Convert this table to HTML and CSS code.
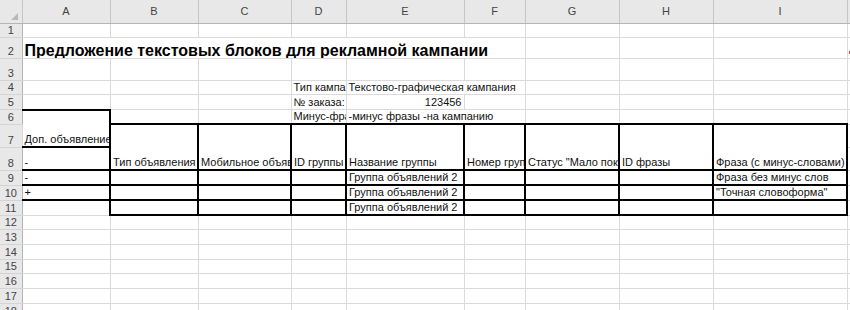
FILE: index.html
```html
<!DOCTYPE html>
<html lang="ru">
<head>
  <meta charset="UTF-8">
  <title>Предложение текстовых блоков</title>
  <link rel="stylesheet" href="styles.css">
</head>
<body>
  <table class="sheet">
    <colgroup>
      <col class="col-rh">
      <col class="col-a">
      <col class="col-b">
      <col class="col-c">
      <col class="col-d">
      <col class="col-e">
      <col class="col-f">
      <col class="col-g">
      <col class="col-h">
      <col class="col-i">
      <col class="col-j">
    </colgroup>
    <thead>
      <tr>
        <th class="corner">
          <!-- select all -->
          <svg width="7" height="7" viewBox="0 0 7 7"><polygon points="7,0 7,7 0,7" fill="#b9b9b9"/></svg>
        </th>
        <th>A</th><th>B</th><th>C</th><th>D</th><th>E</th><th>F</th><th>G</th><th>H</th><th>I</th><th>J</th>
      </tr>
    </thead>
    <tbody>
      <tr class="r14"><th>1</th><td></td><td></td><td></td><td></td><td></td><td></td><td></td><td></td><td></td><td></td></tr>
      <tr class="r21">
        <th>2</th>
        <td colspan="6" class="title">Предложение текстовых блоков для рекламной кампании</td>
        <td></td><td></td><td></td>
        <td class="has-note"><span class="note"></span></td>
      </tr>
      <tr class="r22"><th>3</th><td></td><td></td><td></td><td></td><td></td><td></td><td></td><td></td><td></td><td></td></tr>
      <tr class="r14">
        <th>4</th><td></td><td></td><td></td>
        <td>Тип кампании:</td>
        <td colspan="2">Текстово-графическая кампания</td>
        <td></td><td></td><td></td><td></td>
      </tr>
      <tr class="r15">
        <th>5</th><td></td><td></td><td></td>
        <td>№ заказа:</td>
        <td class="num">123456</td>
        <td></td><td></td><td></td><td></td><td></td>
      </tr>
      <tr class="r14">
        <th>6</th>
        <td rowspan="2" class="frame">Доп. объявление</td>
        <td></td><td></td>
        <td>Минус-фразы:</td>
        <td colspan="2">-минус фразы -на кампанию</td>
        <td></td><td></td><td></td><td></td>
      </tr>
      <!-- шапка таблицы объявлений -->
      <tr class="r23">
        <th>7</th>
        <td rowspan="2" class="box">Тип объявления</td>
        <td rowspan="2" class="box">Мобильное объявление</td>
        <td rowspan="2" class="box">ID группы</td>
        <td rowspan="2" class="box">Название группы</td>
        <td rowspan="2" class="box">Номер группы</td>
        <td rowspan="2" class="box">Статус "Мало показов"</td>
        <td rowspan="2" class="box">ID фразы</td>
        <td rowspan="2" class="box">Фраза (с минус-словами)</td>
        <td></td>
      </tr>
      <tr class="r23"><th>8</th><td class="under">-</td><td></td></tr>
      <tr class="r14">
        <th>9</th><td class="under">-</td>
        <td class="box"></td><td class="box"></td><td class="box"></td>
        <td class="box">Группа объявлений 2</td>
        <td class="box"></td><td class="box"></td><td class="box"></td>
        <td class="box">Фраза без минус слов</td>
        <td></td>
      </tr>
      <tr class="r14">
        <th>10</th><td class="under">+</td>
        <td class="box"></td><td class="box"></td><td class="box"></td>
        <td class="box">Группа объявлений 2</td>
        <td class="box"></td><td class="box"></td><td class="box"></td>
        <td class="box">"Точная словоформа"</td>
        <td></td>
      </tr>
      <tr class="r15">
        <th>11</th><td></td>
        <td class="box"></td><td class="box"></td><td class="box"></td>
        <td class="box">Группа объявлений 2</td>
        <td class="box"></td><td class="box"></td><td class="box"></td>
        <td class="box"></td>
        <td></td>
      </tr>
      <tr class="r14"><th>12</th><td></td><td></td><td></td><td></td><td></td><td></td><td></td><td></td><td></td><td></td></tr>
      <tr class="r15"><th>13</th><td></td><td></td><td></td><td></td><td></td><td></td><td></td><td></td><td></td><td></td></tr>
      <tr class="r15"><th>14</th><td></td><td></td><td></td><td></td><td></td><td></td><td></td><td></td><td></td><td></td></tr>
      <tr class="r14"><th>15</th><td></td><td></td><td></td><td></td><td></td><td></td><td></td><td></td><td></td><td></td></tr>
      <tr class="r15"><th>16</th><td></td><td></td><td></td><td></td><td></td><td></td><td></td><td></td><td></td><td></td></tr>
      <tr class="r15"><th>17</th><td></td><td></td><td></td><td></td><td></td><td></td><td></td><td></td><td></td><td></td></tr>
      <tr class="r15"><th>18</th><td></td><td></td><td></td><td></td><td></td><td></td><td></td><td></td><td></td><td></td></tr>
    </tbody>
  </table>
</body>
</html>
```

FILE: styles.css
```css
body {
  margin: 0;
  background: #fff;
  overflow: hidden;
  font-family: "Liberation Sans", Arial, sans-serif;
}

.sheet {
  border-collapse: collapse;
  table-layout: fixed;
  width: 947px;
  font-size: 11px;
  color: #111;
}

.col-rh { width: 22px; }
.col-a { width: 88px; }
.col-b { width: 88px; }
.col-c { width: 93px; }
.col-d { width: 55px; }
.col-e { width: 118px; }
.col-f { width: 61px; }
.col-g { width: 94px; }
.col-h { width: 94px; }
.col-i { width: 134px; }
.col-j { width: 100px; }

.sheet td,
.sheet th {
  padding: 0 2px 1px;
  white-space: nowrap;
  overflow: hidden;
  vertical-align: bottom;
  line-height: 12px;
}

.sheet td {
  border: 1px solid #dadada;
}

/* заголовки столбцов и строк */
.sheet thead th {
  height: 20px;
  background: #e8e8e8;
  color: #444;
  font-weight: normal;
  text-align: center;
  vertical-align: middle;
  border-right: 1px solid #c6c6c6;
  border-bottom: 1px solid #b5b5b5;
}

.sheet thead th.corner {
  text-align: right;
  vertical-align: bottom;
  padding: 0 4px 3px 0;
  line-height: 0;
}

.sheet tbody th {
  background: #e8e8e8;
  color: #444;
  font-weight: normal;
  text-align: center;
  padding: 0 0 1px;
  border-right: 1px solid #b5b5b5;
  border-bottom: 1px solid #d4d4d4;
}

/* высоты строк */
.r14 { height: 14px; }
.r15 { height: 15px; }
.r21 { height: 21px; }
.r22 { height: 22px; }
.r23 { height: 23px; }

.title {
  font-size: 16px;
  font-weight: bold;
  line-height: 18px;
  color: #000;
}

.num {
  text-align: right;
}

/* жирные рамки */
.frame {
  border-top: 2px solid #000 !important;
  border-right: 2px solid #000 !important;
  border-bottom: 2px solid #000 !important;
}

.under {
  border-bottom: 2px solid #000 !important;
}

.box {
  border: 2px solid #000 !important;
}

.has-note {
  position: relative;
}

.note {
  position: absolute;
  left: 1px;
  top: 13px;
  width: 2px;
  height: 3px;
  background: #d24a2a;
}
```
